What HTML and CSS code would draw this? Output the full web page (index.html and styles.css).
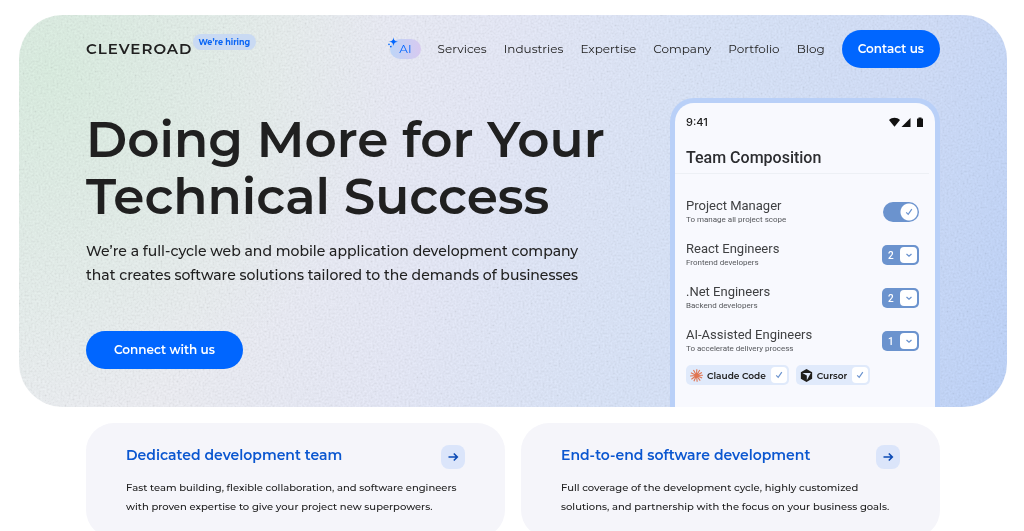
FILE: index.html
```html
<!DOCTYPE html>
<html lang="en">
<head>
<meta charset="utf-8">
<meta name="viewport" content="width=device-width, initial-scale=1">
<title>Cleveroad</title>
<link rel="stylesheet" href="styles.css">
</head>
<body>
<main class="page">
  <section class="hero">
    <svg class="grain" aria-hidden="true">
      <filter id="grain"><feTurbulence type="fractalNoise" baseFrequency="0.5" numOctaves="2" seed="4"/><feColorMatrix type="matrix" values="1.6 0 0 0 -.3  1.6 0 0 0 -.3  1.6 0 0 0 -.3  0 0 0 0 1"/></filter>
      <rect width="100%" height="100%" filter="url(#grain)"/>
    </svg>
    <header class="header wrap">
      <a class="logo" href="#">CLEVEROAD</a>
      <a class="hiring" href="#">We’re hiring</a>
      <nav class="nav">
        <a class="nav-ai" href="#">
          <svg class="spark" viewBox="0 0 12 12" aria-hidden="true"><path d="M6.500 0C6.800 3.200 7.600 4.200 11 4.700C7.600 5.200 6.800 6.200 6.500 9.400C6.200 6.200 5.400 5.200 2 4.700C5.400 4.200 6.200 3.200 6.500 0Z"/><circle cx="2" cy="7.400" r=".8"/><circle cx="3.800" cy="9.600" r=".9"/></svg>AI</a>
        <a href="#">Services</a>
        <a href="#">Industries</a>
        <a href="#">Expertise</a>
        <a href="#">Company</a>
        <a href="#">Portfolio</a>
        <a href="#">Blog</a>
      </nav>
      <button class="btn btn-contact" type="button">Contact us</button>
    </header>
    <div class="hero-body wrap">
      <div class="intro">
        <h1 class="title">Doing More for Your<br>Technical Success</h1>
        <p class="lead">We’re a full-cycle web and mobile application development company<br>that creates software solutions tailored to the demands of businesses</p>
        <button class="btn btn-connect" type="button">Connect with us</button>
      </div>
      <div class="phone">
        <div class="status">
          <span>9:41</span>
          <svg class="status-icons" viewBox="0 0 35 11" aria-hidden="true"><path d="M0 3C3-.1 8-.1 11 3L5.500 9.700Z"/><path d="M21.500 1V10H12.500Z"/><path d="M29.500 1.500V.5H32.500V1.500H33.500Q34 1.500 34 2V9.500Q34 10 33.500 10H28.500Q28 10 28 9.500V2Q28 1.500 28.500 1.500Z"/></svg>
        </div>
        <h2 class="phone-title">Team Composition</h2>
        <div class="roles">
          <div class="role">
            <label for="pm"><span class="role-name">Project Manager</span><span class="role-note">To manage all project scope</span></label>
            <span class="toggle"><input id="pm" type="checkbox" checked><svg class="tick" viewBox="0 0 10 10" aria-hidden="true"><path d="M1.500 5.500L4 8L8.500 1.500"/></svg></span>
          </div>
          <div class="role">
            <label for="react"><span class="role-name">React Engineers</span><span class="role-note">Frontend developers</span></label>
            <span class="count"><select id="react"><option>1</option><option selected>2</option></select><span class="drop"><svg viewBox="0 0 8 8" aria-hidden="true"><path d="M1.500 3L4 5.200L6.500 3"/></svg></span></span>
          </div>
          <div class="role">
            <label for="net"><span class="role-name">.Net Engineers</span><span class="role-note">Backend developers</span></label>
            <span class="count"><select id="net"><option>1</option><option selected>2</option></select><span class="drop"><svg viewBox="0 0 8 8" aria-hidden="true"><path d="M1.500 3L4 5.200L6.500 3"/></svg></span></span>
          </div>
          <div class="role">
            <label for="ai"><span class="role-name">AI-Assisted Engineers</span><span class="role-note">To accelerate delivery process</span></label>
            <span class="count"><select id="ai"><option selected>1</option><option>2</option></select><span class="drop"><svg viewBox="0 0 8 8" aria-hidden="true"><path d="M1.500 3L4 5.200L6.500 3"/></svg></span></span>
          </div>
        </div>
        <div class="chips">
          <label class="chip">
            <svg class="chip-icon burst" viewBox="0 0 12 12" aria-hidden="true"><path d="M6 6L6.300 .2M6 6L9 1M6 6L11 3.300M6 6L11.900 5.700M6 6L11.200 8.400M6 6L9.400 10.700M6 6L6.600 11.800M6 6L3.600 11.300M6 6L1.300 9.500M6 6L.1 6.500M6 6L.8 3.400M6 6L3.200 .9"/></svg>
            <span>Claude Code</span>
            <span class="check"><input type="checkbox" checked><svg class="tick" viewBox="0 0 10 10" aria-hidden="true"><path d="M1.500 5.500L4 8L8.500 1.500"/></svg></span>
          </label>
          <label class="chip">
            <svg class="chip-icon" viewBox="0 0 12 12" aria-hidden="true"><path fill="#1f1e1b" d="M6 0L11.200 3V9L6 12L.8 9V3Z"/><path fill="#e0eafb" d="M2.200 3.700H10L6.300 10.300V6Z"/></svg>
            <span>Cursor</span>
            <span class="check"><input type="checkbox" checked><svg class="tick" viewBox="0 0 10 10" aria-hidden="true"><path d="M1.500 5.500L4 8L8.500 1.500"/></svg></span>
          </label>
        </div>
      </div>
    </div>
  </section>
  <section class="cards wrap">
    <article class="card">
      <div class="card-head">
        <h3>Dedicated development team</h3>
        <a class="arrow" href="#" aria-label="Dedicated development team"><svg viewBox="0 0 12 12" aria-hidden="true"><path d="M1.500 6H10M6.800 2.500L10.300 6L6.800 9.500"/></svg></a>
      </div>
      <p>Fast team building, flexible collaboration, and software engineers<br>with proven expertise to give your project new superpowers.</p>
    </article>
    <article class="card">
      <div class="card-head">
        <h3>End-to-end software development</h3>
        <a class="arrow" href="#" aria-label="End-to-end software development"><svg viewBox="0 0 12 12" aria-hidden="true"><path d="M1.500 6H10M6.800 2.500L10.300 6L6.800 9.500"/></svg></a>
      </div>
      <p>Full coverage of the development cycle, highly customized<br>solutions, and partnership with the focus on your business goals.</p>
    </article>
  </section>
</main>
</body>
</html>
```
FILE: styles.css
```css
* { box-sizing: border-box; }
body {
  margin: 0;
  background: #fff;
  color: #202020;
  font-family: Montserrat, Inter, "Liberation Sans", sans-serif;
  overflow: hidden;
}
h1, h2, h3, p { margin: 0; }
a { color: inherit; text-decoration: none; }
button, select { font: inherit; }
.page { padding: 15px 17px 0 19px; }
.wrap { padding: 0 67px; }
.hero {
  position: relative;
  overflow: hidden;
  border-radius: 44px;
  background:
    radial-gradient(ellipse 340px 340px at 3% 14%, rgba(216, 238, 222, .8) 0%, rgba(216, 238, 222, 0) 100%),
    linear-gradient(108deg, #ebf0f1 0%, #eeeff4 24%, #e7eaf8 44%, #dae5f9 65%, #d2dff9 82%, #bfd4fa 100%);
}
.grain {
  position: absolute;
  inset: 0;
  width: 100%;
  height: 100%;
  opacity: .09;
  mix-blend-mode: multiply;
}
.header {
  position: relative;
  display: flex;
  align-items: center;
  padding-top: 15px;
}
.logo {
  font-size: 15px;
  font-weight: 600;
  line-height: 20px;
  letter-spacing: 1px;
}
.hiring {
  margin: 0 0 14px 0;
  padding: 0 6px;
  border-radius: 8px;
  background: #c9daf3;
  color: #0a66f5;
  font-size: 8px;
  font-weight: 700;
  line-height: 16px;
}
.nav {
  display: flex;
  align-items: center;
  gap: 17px;
  margin-left: auto;
  margin-right: 17px;
  font-size: 12px;
  line-height: 20px;
}
.nav-ai {
  position: relative;
  padding: 0 9px;
  border-radius: 10px;
  background: linear-gradient(90deg, #bdd5f7, #d7c9f0);
  color: #0066ff;
}
.spark {
  position: absolute;
  left: -3px;
  top: -2px;
  width: 12px;
  height: 12px;
  fill: #0066ff;
}
.btn {
  border: 0;
  border-radius: 19px;
  background: #0066ff;
  color: #fff;
  font-size: 12px;
  font-weight: 600;
  line-height: 38px;
  cursor: pointer;
}
.btn-contact { padding: 0 16px; }
.hero-body {
  position: relative;
  display: flex;
  justify-content: space-between;
  align-items: flex-start;
  padding-top: 30px;
}
.intro { padding-top: 13px; }
.title {
  font-size: 50px;
  font-weight: 600;
  line-height: 57px;
}
.lead {
  margin-top: 14px;
  font-size: 14px;
  font-weight: 500;
  line-height: 24px;
}
.btn-connect { margin-top: 44px; padding: 0 28px; }
.phone {
  width: 270px;
  padding: 10px 11px 22px;
  border: 5px solid #b9d0f8;
  border-bottom: 0;
  border-radius: 24px 24px 0 0;
  background: #f8f9fe;
  font-family: Roboto, "Liberation Sans", sans-serif;
}
.status {
  display: flex;
  align-items: center;
  justify-content: space-between;
  font-family: Inter, "Liberation Sans", sans-serif;
  font-size: 11px;
  font-weight: 500;
  line-height: 18px;
}
.status-icons { width: 35px; height: 11px; fill: #111; }
.phone-title {
  margin: 0 -5px 0 -11px;
  padding: 16px 0 4px 11px;
  border-bottom: 1px solid #edf0f5;
  color: #2c2d30;
  font-size: 16px;
  font-weight: 500;
  line-height: 22px;
}
.roles { padding-top: 20px; }
.role {
  display: flex;
  align-items: center;
  justify-content: space-between;
  height: 36px;
  margin-bottom: 7px;
  padding-right: 5px;
}
.role:last-child { margin-bottom: 0; }
.role-name { display: block; font-size: 13px; line-height: 16px; color: #3f4042; }
.role-note { display: block; font-size: 8px; line-height: 12px; color: #55575b; }
.toggle, .count, .check { position: relative; display: block; }
.toggle { height: 20px; }
.toggle input {
  appearance: none;
  display: block;
  width: 36px;
  height: 20px;
  margin: 0;
  border-radius: 10px;
  background: radial-gradient(circle at 26px 10px, #fff 8px, #6b93ce 9px);
}
.tick { position: absolute; fill: none; stroke: #6b93ce; stroke-width: 1.5; width: 8px; height: 8px; pointer-events: none; }
.toggle .tick { right: 6px; top: 6px; }
.count select {
  appearance: none;
  display: block;
  width: 37px;
  height: 20px;
  padding: 0 6px;
  border: 0;
  border-radius: 5px;
  background: #6b93ce;
  color: #fff;
  font-size: 10px;
  font-weight: 500;
}
.drop {
  position: absolute;
  right: 2px;
  top: 2px;
  display: grid;
  place-items: center;
  width: 17px;
  height: 16px;
  border-radius: 4px;
  background: #fff;
  pointer-events: none;
}
.drop svg { width: 8px; height: 8px; fill: none; stroke: #6b93ce; stroke-width: 1.3; }
.chips { display: flex; gap: 7px; padding-top: 6px; }
.chip {
  display: flex;
  align-items: center;
  gap: 4px;
  height: 20px;
  padding: 0 2px 0 4px;
  border-radius: 5px;
  background: #e0eafb;
  font-family: Montserrat, Inter, "Liberation Sans", sans-serif;
  font-size: 9px;
  font-weight: 600;
  white-space: nowrap;
}
.chip-icon { width: 13px; height: 13px; }
.burst { fill: none; stroke: #e07350; stroke-width: 1; }
.check { margin-left: 1px; }
.check input {
  appearance: none;
  display: block;
  width: 16px;
  height: 16px;
  margin: 0;
  border-radius: 4px;
  background: #fff;
}
.check .tick { left: 4px; top: 4px; }
.cards {
  display: grid;
  grid-template-columns: repeat(2, minmax(0, 1fr));
  gap: 16px;
  padding-top: 16px;
}
.card {
  padding: 22px 40px;
  border-radius: 28px;
  background: #f5f5fa;
}
.card-head { display: flex; align-items: flex-start; justify-content: space-between; }
.card h3 {
  color: #0b57d0;
  font-size: 14px;
  font-weight: 600;
  line-height: 20px;
}
.arrow {
  display: grid;
  place-items: center;
  width: 24px;
  height: 24px;
  border-radius: 8px;
  background: #dbe5fa;
}
.arrow svg { width: 12px; height: 12px; fill: none; stroke: #0b4ab5; stroke-width: 1.6; }
.card p {
  margin-top: 9px;
  font-size: 10px;
  font-weight: 500;
  line-height: 19px;
  white-space: nowrap;
}
```
